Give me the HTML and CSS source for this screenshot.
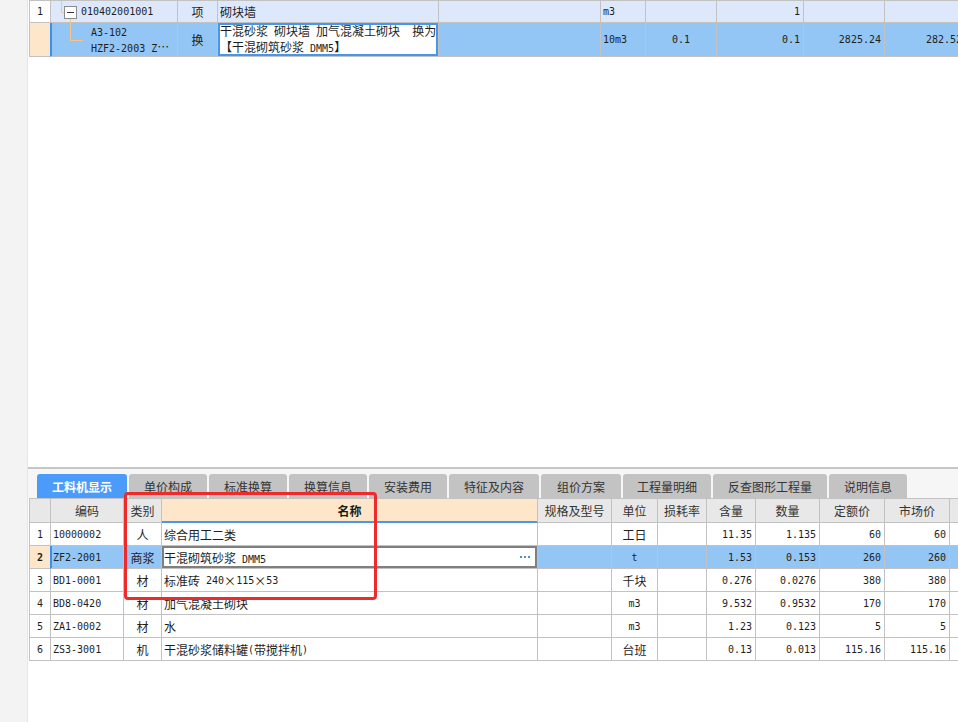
FILE: index.html
```html
<!DOCTYPE html>
<html lang="zh-CN">
<head>
<meta charset="utf-8">
<title>工料机显示</title>
<link rel="stylesheet" href="styles.css">
</head>
<body>
<div class="app">
  <aside class="side"></aside>
  <main class="main">
    <section class="top-pane">
      <div class="grid top-grid">
        <div class="row r-item">
          <div class="c num ctr"><span class="n">1</span></div>
          <div class="c code1"><span class="n">010402001001</span></div>
          <div class="c ctr">项</div>
          <div class="c">砌块墙</div>
          <div class="c"></div>
          <div class="c"><span class="n">m3</span></div>
          <div class="c"></div>
          <div class="c rt"><span class="n">1</span></div>
          <div class="c"></div>
          <div class="c"></div>
        </div>
        <div class="row r-sub">
          <div class="c num"></div>
          <div class="c code2 stack">
            <div><span class="n">A3-102</span></div>
            <div><span class="n">HZF2-2003 Z</span>…</div>
          </div>
          <div class="c ctr">换</div>
          <div class="c edit stack">
            <div>干混砂浆<span class="n"> </span>砌块墙<span class="n"> </span>加气混凝土砌块<span class="n">  </span>换为</div>
            <div>【干混砌筑砂浆<span class="n"> DMM5</span>】</div>
          </div>
          <div class="c"></div>
          <div class="c"><span class="n">10m3</span></div>
          <div class="c ctr"><span class="n">0.1</span></div>
          <div class="c rt"><span class="n">0.1</span></div>
          <div class="c rt"><span class="n">2825.24</span></div>
          <div class="c rt"><span class="n">282.52</span></div>
        </div>
        <svg class="tree" width="60" height="45" viewBox="0 0 60 45">
          <path d="M31.5 0V11.5H34" fill="none" stroke="#f5c68c" stroke-width="1"/>
          <path d="M40.5 18V39.5H53" fill="none" stroke="#f5c68c" stroke-width="1"/>
          <rect x="34.5" y="5.5" width="12" height="12" fill="#fff" stroke="#8c8c8c"/>
          <path d="M37 11.5H44" stroke="#333" stroke-width="1"/>
        </svg>
      </div>
    </section>

    <nav class="tabs">
      <div class="tab active t90">工料机显示</div>
      <div class="tab t78">单价构成</div>
      <div class="tab t78">标准换算</div>
      <div class="tab t78">换算信息</div>
      <div class="tab t78">安装费用</div>
      <div class="tab t90">特征及内容</div>
      <div class="tab t80">组价方案</div>
      <div class="tab t88">工程量明细</div>
      <div class="tab t114">反查图形工程量</div>
      <div class="tab t78">说明信息</div>
    </nav>

    <section class="grid bottom-grid">
      <div class="row hd">
        <div class="c"></div>
        <div class="c">编码</div>
        <div class="c">类别</div>
        <div class="c name-h">名称</div>
        <div class="c">规格及型号</div>
        <div class="c">单位</div>
        <div class="c">损耗率</div>
        <div class="c">含量</div>
        <div class="c">数量</div>
        <div class="c">定额价</div>
        <div class="c">市场价</div>
        <div class="c"></div>
      </div>
      <div class="row br">
        <div class="c num ctr"><span class="n">1</span></div>
        <div class="c"><span class="n">10000002</span></div>
        <div class="c ctr">人</div>
        <div class="c">综合用工二类</div>
        <div class="c"></div>
        <div class="c ctr">工日</div>
        <div class="c"></div>
        <div class="c rt"><span class="n">11.35</span></div>
        <div class="c rt"><span class="n">1.135</span></div>
        <div class="c rt"><span class="n">60</span></div>
        <div class="c rt"><span class="n">60</span></div>
        <div class="c"></div>
      </div>
      <div class="row br sel">
        <div class="c num ctr"><span class="n">2</span></div>
        <div class="c code"><span class="n">ZF2-2001</span></div>
        <div class="c ctr">商浆</div>
        <div class="c name-edit">
          <span>干混砌筑砂浆<span class="n"> DMM5</span></span>
          <svg class="dots" width="10" height="3" viewBox="0 0 10 3"><rect x="0" y="0" width="2" height="2" fill="#4a90d9"/><rect x="4" y="0" width="2" height="2" fill="#4a90d9"/><rect x="8" y="0" width="2" height="2" fill="#4a90d9"/></svg>
        </div>
        <div class="c"></div>
        <div class="c ctr"><span class="n">t</span></div>
        <div class="c"></div>
        <div class="c rt"><span class="n">1.53</span></div>
        <div class="c rt"><span class="n">0.153</span></div>
        <div class="c rt"><span class="n">260</span></div>
        <div class="c rt"><span class="n">260</span></div>
        <div class="c"></div>
      </div>
      <div class="row br">
        <div class="c num ctr"><span class="n">3</span></div>
        <div class="c"><span class="n">BD1-0001</span></div>
        <div class="c ctr">材</div>
        <div class="c">标准砖<span class="n"> 240</span>×<span class="n">115</span>×<span class="n">53</span></div>
        <div class="c"></div>
        <div class="c ctr">千块</div>
        <div class="c"></div>
        <div class="c rt"><span class="n">0.276</span></div>
        <div class="c rt"><span class="n">0.0276</span></div>
        <div class="c rt"><span class="n">380</span></div>
        <div class="c rt"><span class="n">380</span></div>
        <div class="c"></div>
      </div>
      <div class="row br">
        <div class="c num ctr"><span class="n">4</span></div>
        <div class="c"><span class="n">BD8-0420</span></div>
        <div class="c ctr">材</div>
        <div class="c">加气混凝土砌块</div>
        <div class="c"></div>
        <div class="c ctr"><span class="n">m3</span></div>
        <div class="c"></div>
        <div class="c rt"><span class="n">9.532</span></div>
        <div class="c rt"><span class="n">0.9532</span></div>
        <div class="c rt"><span class="n">170</span></div>
        <div class="c rt"><span class="n">170</span></div>
        <div class="c"></div>
      </div>
      <div class="row br">
        <div class="c num ctr"><span class="n">5</span></div>
        <div class="c"><span class="n">ZA1-0002</span></div>
        <div class="c ctr">材</div>
        <div class="c">水</div>
        <div class="c"></div>
        <div class="c ctr"><span class="n">m3</span></div>
        <div class="c"></div>
        <div class="c rt"><span class="n">1.23</span></div>
        <div class="c rt"><span class="n">0.123</span></div>
        <div class="c rt"><span class="n">5</span></div>
        <div class="c rt"><span class="n">5</span></div>
        <div class="c"></div>
      </div>
      <div class="row br">
        <div class="c num ctr"><span class="n">6</span></div>
        <div class="c"><span class="n">ZS3-3001</span></div>
        <div class="c ctr">机</div>
        <div class="c">干混砂浆储料罐<span class="n">(</span>带搅拌机<span class="n">)</span></div>
        <div class="c"></div>
        <div class="c ctr">台班</div>
        <div class="c"></div>
        <div class="c rt"><span class="n">0.13</span></div>
        <div class="c rt"><span class="n">0.013</span></div>
        <div class="c rt"><span class="n">115.16</span></div>
        <div class="c rt"><span class="n">115.16</span></div>
        <div class="c"></div>
      </div>
    </section>
  </main>
  <div class="highlight"></div>
</div>
</body>
</html>
```

FILE: styles.css
```css
* { box-sizing: border-box; }
html, body { margin: 0; padding: 0; }
body {
  width: 958px;
  height: 722px;
  overflow: hidden;
  background: #fff;
  font-family: "Noto Sans CJK SC", "Microsoft YaHei", sans-serif;
  font-size: 12px;
  color: #1e1e1e;
}
.app { position: relative; display: flex; height: 722px; }
.side { width: 28px; flex: none; background: #f3f3f3; border-right: 1px solid #e6e6e6; }
.main {
  flex: 1;
  min-width: 0;
  overflow: hidden;
  display: flex;
  flex-direction: column;
  background: #fff;
}
.top-pane { height: 467px; flex: none; }

.grid {
  margin-left: 1px;
  border-left: 1px solid #c2c2c2;
  border-top: 1px solid #c2c2c2;
  width: max-content;
}
.top-grid { position: relative; }
.row { display: grid; }
.top-grid .row { grid-template-columns: 21px 127px 40px 221px 162px 45px 71px 87px 81px 81px; }
.bottom-grid .row { grid-template-columns: 21px 73px 38px 376px 74px 46px 49px 49px 64px 65px 65px 60px; }

.c {
  border-right: 1px solid #c2c2c2;
  border-bottom: 1px solid #c2c2c2;
  display: flex;
  align-items: center;
  padding: 0 2px;
  white-space: nowrap;
  overflow: hidden;
  min-width: 0;
}
.ctr { justify-content: center; }
.rt { justify-content: flex-end; padding-right: 3px; }
.stack { flex-direction: column; align-items: flex-start; justify-content: center; line-height: 14px; }

.n { font-family: "DejaVu Sans Mono", "Liberation Mono", monospace; font-size: 10px; white-space: pre; }

/* top table */
.r-item { height: 22px; background: #dde9fb; }
.r-item .num { background: #fff; }
.r-sub { height: 34px; background: #93c6f4; }
.r-sub .num { background: #fde6c9; border-right-color: #3c8ee8; }
.code1 { padding-left: 30px; }
.code2 { padding-left: 40px; box-shadow: inset 1px 0 #3c8ee8; }
.edit { background: #fff; box-shadow: inset 0 0 0 2px #4696ea; padding-left: 2px; }
.tree { position: absolute; left: 0; top: 0; pointer-events: none; }

/* tabs */
.tabs {
  height: 31px;
  flex: none;
  border-top: 2px solid #c6c6c6;
  background: #f6f6f6;
  display: flex;
  align-items: flex-end;
  gap: 2px;
  padding-left: 9px;
}
.tab {
  height: 24px;
  flex: none;
  border-radius: 3px 3px 0 0;
  background: #c3c3c3;
  color: #333;
  display: flex;
  align-items: center;
  justify-content: center;
}
.tab.active { background: #4a9bfa; color: #fff; font-weight: bold; }
.t78 { width: 78px; }
.t80 { width: 80px; }
.t88 { width: 88px; }
.t90 { width: 90px; }
.t114 { width: 114px; }

/* bottom table */
.hd { height: 24px; background: #e8e8e8; }
.hd .c { justify-content: center; color: #333; }
.hd .name-h {
  background: #fde6c9;
  font-weight: bold;
  color: #1a1a1a;
  border-bottom-color: #4a97e8;
  box-shadow: inset 0 -1px #4a97e8;
}
.br { height: 23px; }
.sel { background: #93c6f4; }
.sel .num { background: #fde6c9; font-weight: bold; border-right-color: #3c8ee8; }
.sel .code { box-shadow: inset 1px 0 #3c8ee8; }
.name-edit {
  background: #fff;
  box-shadow: inset 0 0 0 2px #7f7f7f;
  justify-content: space-between;
  padding: 0 7px 0 2px;
}
.dots { display: block; }

.highlight {
  position: absolute;
  left: 124px;
  top: 492px;
  width: 253px;
  height: 108px;
  border: 3px solid #ef2a2a;
  border-radius: 4px;
  pointer-events: none;
}
```
